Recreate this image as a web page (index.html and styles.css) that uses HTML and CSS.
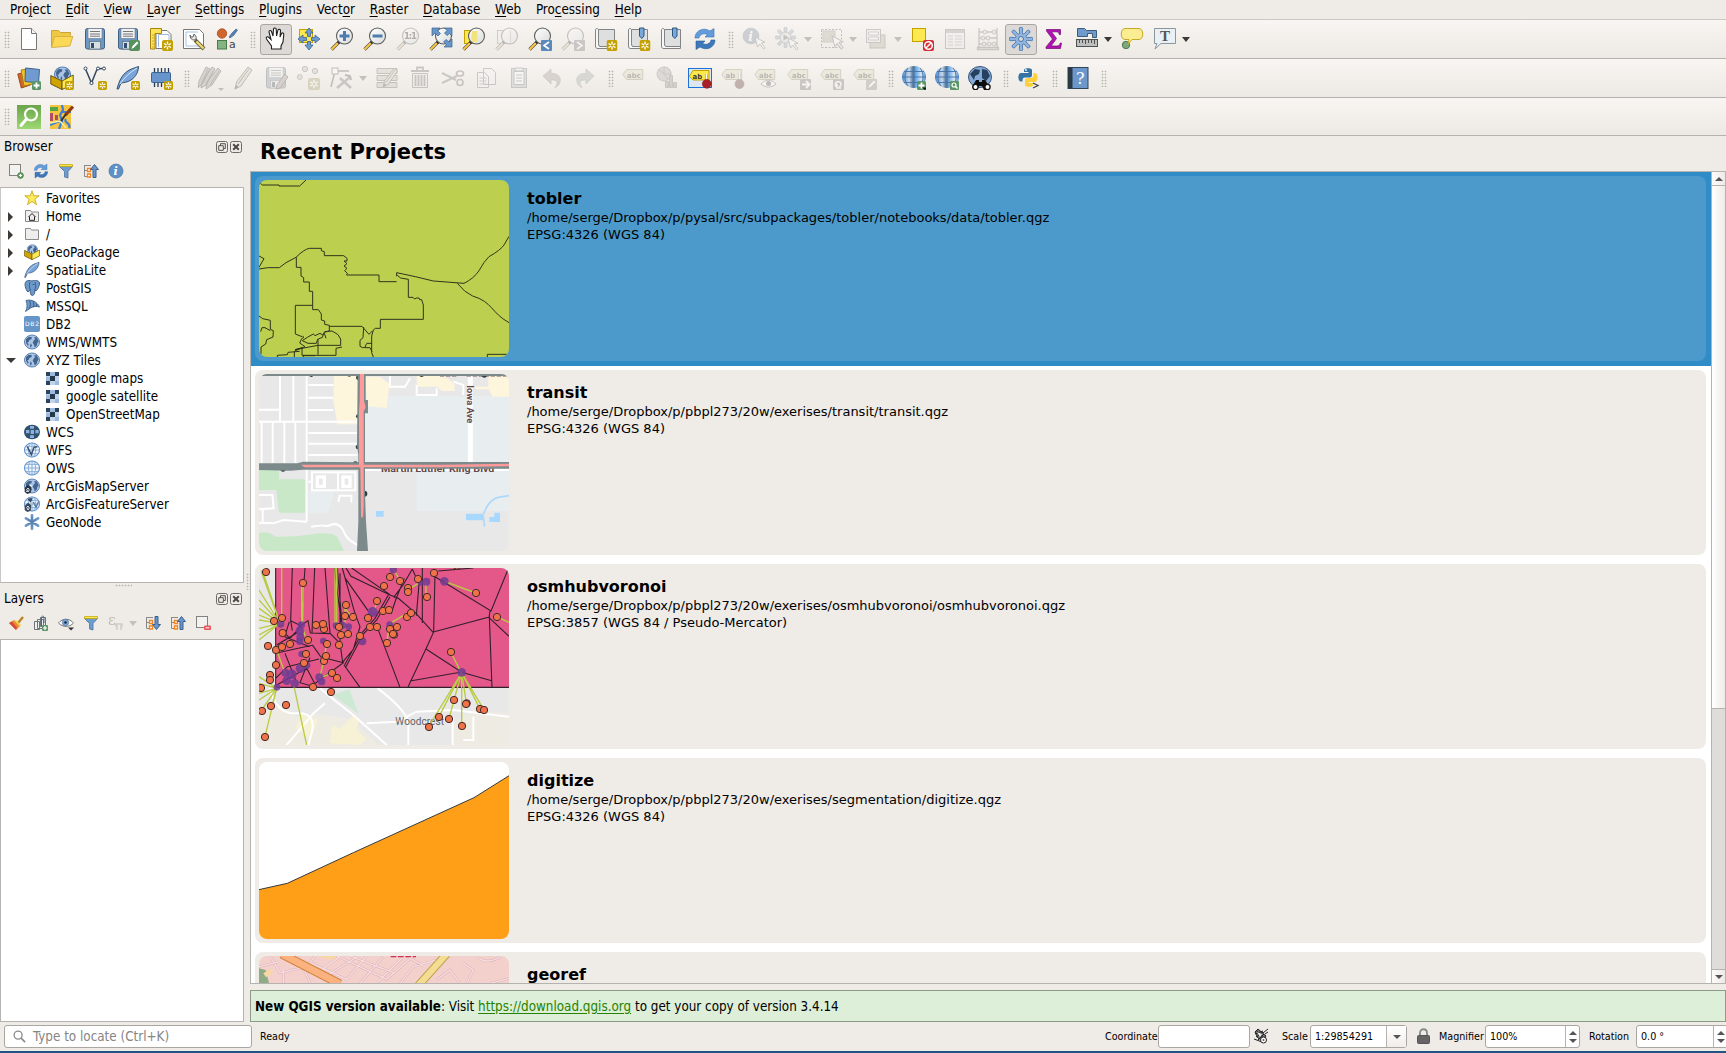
FILE: index.html
```html
<!DOCTYPE html>
<html lang="en">
<head>
<meta charset="utf-8">
<title>QGIS</title>
<link rel="stylesheet" href="styles.css">
</head>
<body>
<svg class="defs" width="0" height="0" aria-hidden="true">
<defs>
<linearGradient id="g-glass" x1="0" y1="0" x2="1" y2="1"><stop offset="0" stop-color="#fff"/><stop offset="1" stop-color="#d9dcdc"/></linearGradient>
<linearGradient id="g-green" x1="0" y1="0" x2="0" y2="1"><stop offset="0" stop-color="#6ba44a"/><stop offset="1" stop-color="#9cd873"/></linearGradient>
<linearGradient id="g-globe" x1="0" y1="0" x2="1" y2="0"><stop offset="0" stop-color="#4b88cc"/><stop offset=".3" stop-color="#c9d8e8"/><stop offset=".45" stop-color="#5b7898"/><stop offset=".6" stop-color="#74aee8"/><stop offset=".8" stop-color="#e0e8ef"/><stop offset="1" stop-color="#4b88cc"/></linearGradient>

<symbol id="star" viewBox="0 0 11 11"><rect width="11" height="11" rx="2" fill="#c4a000"/><path d="M5.500 1.500v8M2 3.500l7 4M9 3.500l-7 4" stroke="#fff" stroke-width="1.400"/><circle cx="5.500" cy="5.500" r="1.200" fill="#c4a000"/></symbol>
<symbol id="plus" viewBox="0 0 9 9"><rect width="9" height="9" rx="1.500" fill="#5b9568"/><path d="M4.500 1.500v6M1.500 4.500h6" stroke="#fff" stroke-width="1.800"/></symbol>
<symbol id="lens" viewBox="0 0 24 24"><path d="M9 15l-7.500 7.500" stroke="#555" stroke-width="3.200"/><path d="M8 16l-6.500 6.500" stroke="#fcc93c" stroke-width="1.900"/><path d="M10.500 13.500l-2.500 2.500" stroke="#222" stroke-width="2.600"/><circle cx="14.500" cy="9" r="8" fill="url(#g-glass)" stroke="#5c5c5c" stroke-width="1.100"/></symbol>
<symbol id="cursor" viewBox="0 0 12 14"><path d="M1 1l2.500 10 2.200-3 3.800 5 1.600-1.300-3.700-4.700 3.600-.8z" fill="#fff" stroke="#777" stroke-width="1"/></symbol>
<symbol id="world" viewBox="0 0 24 24"><ellipse cx="12" cy="12" rx="11.300" ry="10.500" fill="#a9c4e6" stroke="#5a84b6" stroke-width="1.500"/><path d="M3 8l4-4 5 1-1 3-3 1-1 3-2 0 2 4-1 2-3-5zM15 5l4 0 3 6-2 3-1 4-3 2-1-4-2-3 2-4 2-1zM10 14l2 3-2 4-1-3z" fill="#45648b"/></symbol>
<symbol id="grid" viewBox="0 0 24 24"><ellipse cx="12" cy="12" rx="11.300" ry="10.500" fill="#edf4fc" stroke="#6494cb" stroke-width="1.600"/><path d="M1 12h22M3 6.500h18M3 17.500h18M12 1.500v21" fill="none" stroke="#84abd7" stroke-width="1.400"/><ellipse cx="12" cy="12" rx="5.500" ry="10.500" fill="none" stroke="#84abd7" stroke-width="1.400"/></symbol>
<symbol id="pencil" viewBox="0 0 24 24"><path d="M17 1l4 3-11 16-6 3 1.500-7z" fill="#d8cf94" stroke="#554f38" stroke-width="1"/><path d="M18 3L7 18M4 23l1-3.500 2 1.500z" stroke="#554f38" fill="#333" stroke-width="1"/></symbol>
<symbol id="tag" viewBox="0 0 24 24"><path d="M.8 8.500L4.500 3.500h16.200v10H4.500z" fill="#f1d971" stroke="#a98e2f"/></symbol>
<symbol id="i-restore" viewBox="0 0 12 12"><rect x=".5" y=".5" width="11" height="11" rx="2" fill="none" stroke="#6c6a67"/><path d="M4.500 5V2.700h4.800v4.800H7.500M2.700 4.700h4.600v4.600H2.700z" fill="none" stroke="#55534f"/></symbol>
<symbol id="i-close" viewBox="0 0 12 12"><rect x=".5" y=".5" width="11" height="11" rx="2" fill="none" stroke="#6c6a67"/><path d="M3.200 3.200l5.600 5.600M8.800 3.200L3.200 8.800" stroke="#4c4a47" stroke-width="2"/></symbol>

<symbol id="i-new" viewBox="0 0 24 24"><path d="M4.500 1.500h10l5 5v16h-15z" fill="#fff" stroke="#777"/><path d="M14.500 1.500v5h5" fill="#f4f4f4" stroke="#777"/></symbol>
<symbol id="i-open" viewBox="0 0 24 24"><path d="M1.500 19.500v-16h7l2 2h10v3" fill="#efc844" stroke="#c8a43a"/><path d="M1.500 20.500l3-11h18.300l-3 9.500z" fill="#fcd857" stroke="#d7b145"/></symbol>
<symbol id="i-save" viewBox="0 0 24 24"><rect x="2.500" y="1.500" width="19" height="20.500" rx="2" fill="#6e97c4" stroke="#41617f"/><rect x="5" y="1.500" width="14" height="10" fill="#f2f2f2" stroke="#66798f" stroke-width=".6"/><path d="M7 4.500h10M7 7h10M7 9.200h10" stroke="#777"/><rect x="6.500" y="14.500" width="11" height="7.500" fill="#d7e0de" stroke="#566c83" stroke-width=".7"/><rect x="8" y="16" width="3" height="5" fill="#314f6e"/></symbol>
<symbol id="i-saveas" viewBox="0 0 24 24"><use href="#i-save"/><rect x="13" y="13" width="11" height="11" rx="2" fill="#56925c"/><path d="M15.500 22l1-3 4.500-4.500 1.500 1.500-4.500 4.500z" fill="#fff"/></symbol>
<symbol id="i-layout" viewBox="0 0 24 24"><path d="M7 3.500h11l4 4v14H7z" fill="#fff" stroke="#777"/><path d="M9.500 20V7.500H20V14" fill="none" stroke="#9fbcdd"/><path d="M1.500 1.500h11v5H6v15.500H1.500z" fill="#fbe35c" stroke="#a98308"/><path d="M3 8h3M3 11h3M3 14h3M3 17h3M3 20h3" stroke="#d0ab30"/><use href="#star" x="13" y="13" width="11" height="11"/></symbol>
<symbol id="i-layoutmgr" viewBox="0 0 24 24"><path d="M1.500 2.500h16l4 4V21.500h-20z" fill="#fff" stroke="#777"/><path d="M4 5h12M4 5v14h14" fill="none" stroke="#a7c1e3"/><path d="M13 13l9 9" stroke="#6c6440" stroke-width="4"/><path d="M14.500 14.500l7 7" stroke="#eadb78" stroke-width="2.400"/><path d="M8 8c0 5 4 6 6 4 1-2-1-4-2-5l-1 3-2 0z" fill="#e5e5e5" stroke="#666"/></symbol>
<symbol id="i-style" viewBox="0 0 24 24"><circle cx="7" cy="6.500" r="4.700" fill="#cf642d" stroke="#a94c22" stroke-width=".8"/><path d="M14 10l3-4 4-4 1.500 1-3.500 5-4 3z" fill="#5482b4" stroke="#3e638c" stroke-width=".7"/><rect x="2.500" y="13.500" width="9" height="8.500" fill="#84b384" stroke="#497a49"/><text x="14" y="21" class="glyph-a">a</text></symbol>
<symbol id="i-pan" viewBox="0 0 24 24"><path d="M7.500 22v-3L2.500 12c-1-2 1-3 2.500-1.500l2 2L5 5c0-2 2-2 2.500-.5L9 9 9.500 2c.5-1.500 2.500-1.300 2.700 0l.4 7L14 3c.7-1.300 2.700-.7 2.500.8L16 10l1.500-3.500c.8-1.300 2.500-.5 2.300.8L19 15l-2 4v3z" fill="#fff" stroke="#1f1f1f" stroke-width="1.100"/></symbol>
<symbol id="i-panlayer" viewBox="0 0 24 24"><rect x="2.500" y="2.500" width="13" height="13" fill="#fce94f" stroke="#c4a000"/><path d="M12 1l4 5h-2.500v3.500H10.500V6H8zM12 23l4-5h-2.500v-3.500h-3V18H8zM1 12l5-4v2.500h3.500v3H6V16zM23 12l-5-4v2.500h-3.500v3H18V16z" fill="#6d9bd0" stroke="#3c628c" stroke-width=".8"/></symbol>
<symbol id="i-zoomin" viewBox="0 0 24 24"><use href="#lens"/><path d="M14.500 4v10M9.500 9h10" stroke="#4f7cb0" stroke-width="3"/></symbol>
<symbol id="i-zoomout" viewBox="0 0 24 24"><use href="#lens"/><path d="M9.500 9h10" stroke="#4f7cb0" stroke-width="3"/></symbol>
<symbol id="i-zoom11" viewBox="0 0 24 24"><use href="#lens"/><text x="8" y="12.300" textLength="13" class="glyph-b">1:1</text></symbol>
<symbol id="i-zoomfull" viewBox="0 0 24 24"><use href="#lens"/><path d="M3 1h8L8.500 3.500l3 3-2.500 2.500-3-3L3 9zM23 1v8l-2.500-2.500-2.500 2-2.500-2.500 2.500-2.500L15.500 1zM23 20h-8l2.500-2.500-3-2.500 2.500-2.500 3 2.500L23 12z" fill="#6797ca" stroke="#39618e" stroke-width=".7"/></symbol>
<symbol id="i-zoomsel" viewBox="0 0 24 24"><rect x="2.500" y="3.500" width="13" height="13" fill="#fce94f" stroke="#c4a000"/><use href="#lens"/><path d="M10 4h5.500v11H11l-2-3z" fill="#f3e37c"/></symbol>
<symbol id="i-zoomlayer" viewBox="0 0 24 24"><rect x="2.500" y="3.500" width="13" height="13" fill="#eee" stroke="#888"/><use href="#lens"/><path d="M15.500 3.500v12" stroke="#aaa"/></symbol>
<symbol id="i-zoomlast" viewBox="0 0 24 24"><use href="#lens"/><rect x="13" y="13" width="11" height="11" rx="1" fill="#5b88bd"/><path d="M21 15l-5 3.500 5 3.500" fill="none" stroke="#fff" stroke-width="1.600"/></symbol>
<symbol id="i-zoomnext" viewBox="0 0 24 24"><use href="#lens"/><rect x="13" y="13" width="11" height="11" rx="1" fill="#777"/><path d="M16 15l5 3.500-5 3.500" fill="none" stroke="#fff" stroke-width="1.600"/></symbol>
<symbol id="i-book" viewBox="0 0 24 24"><path d="M4.500 2.500h16v17h-16z" fill="#dedfdf" stroke="#808486"/><path d="M4.500 16.500V3c0-2-3-2-3 0v16c0 2 1 2.500 2.500 2.500H20.500v-2H6c-1.500 0-1.500-3-1.500-3z" fill="#f7f7f7" stroke="#808486"/></symbol>
<symbol id="i-newmap" viewBox="0 0 24 24"><use href="#i-book"/><use href="#star" x="12.500" y="13" width="11" height="11"/></symbol>
<symbol id="i-bookmark" viewBox="0 0 24 24"><use href="#i-book"/><path d="M12.500 1h4.500v8l-2.200 2.500L12.500 9z" fill="#79a8dc" stroke="#2e567f"/></symbol>
<symbol id="i-newbookmark" viewBox="0 0 24 24"><use href="#i-bookmark"/><use href="#star" x="12.500" y="13" width="11" height="11"/></symbol>
<symbol id="i-refresh" viewBox="0 0 24 24"><path d="M2 11c0-7 8-11.500 15-7l4-2.500V10h-9l2.500-2.500C10 5.500 6.500 8 6 11z" fill="#639cdb" stroke="#3971b2" stroke-width=".6"/><path d="M22 13c0 7-8 11.500-15 7l-4 2.500V14h9l-2.500 2.500c4 2 8 0 8.500-3.500z" fill="#3c78ba" stroke="#2e609c" stroke-width=".6"/></symbol>
<symbol id="i-info" viewBox="0 0 24 24"><circle cx="12" cy="12" r="10.500" fill="#5d8fc9" stroke="#44709f"/><text x="8.300" y="18.500" class="glyph-i">i</text></symbol>
<symbol id="i-identify" viewBox="0 0 24 24"><use href="#i-info" x="0" y="0" width="18" height="18"/><use href="#cursor" x="12" y="9" width="12" height="14"/></symbol>
<symbol id="i-gear" viewBox="0 0 24 24"><g fill="#94b5dd" stroke="#4578b2" stroke-width=".9"><path d="M10.700 6.500L10.300 1.800a1.700 1.700 0 0 1 3.400 0l-.4 4.700 1.700.7 3.100-3.600a1.700 1.700 0 0 1 2.400 2.400L16.900 9.100l.7 1.600 4.700-.4a1.700 1.700 0 0 1 0 3.400l-4.700-.4-.7 1.700 3.600 3.100a1.700 1.700 0 0 1-2.400 2.400L15 16.900l-1.700.7.4 4.700a1.700 1.700 0 0 1-3.400 0l.4-4.700-1.700-.7-3.100 3.600a1.700 1.700 0 0 1-2.400-2.400L7.100 15l-.7-1.700-4.700.4a1.700 1.700 0 0 1 0-3.400l4.700.4.7-1.600-3.600-3.100a1.700 1.700 0 0 1 2.400-2.400L9 7.200z"/></g><circle cx="12" cy="12" r="2.500" fill="#dcdad7" stroke="#4578b2"/></symbol>
<symbol id="i-action" viewBox="0 0 24 24"><use href="#i-gear" width="21" height="21"/><circle cx="10.500" cy="10.500" r="5.500" fill="#ddd" stroke="#888"/><path d="M8.500 7.500l5 3-5 3z" fill="#666"/><use href="#cursor" x="12" y="10" width="12" height="14"/></symbol>
<symbol id="i-select" viewBox="0 0 24 24"><rect x="1.500" y="2.500" width="20" height="18" fill="none" stroke="#555" stroke-dasharray="2 1.500"/><rect x="3" y="4" width="12" height="11" fill="#bcae6c" stroke="#998d59"/><use href="#cursor" x="11" y="8" width="13" height="15"/></symbol>
<symbol id="i-forms" viewBox="0 0 24 24"><rect x="5" y="8" width="15" height="13" fill="#c1b578" stroke="#777"/><rect x="1.500" y="2.500" width="14" height="13" fill="#eee" stroke="#777"/><path d="M3.500 5h10v3h-10zM3.500 10h10v3h-10z" fill="#fff" stroke="#888"/></symbol>
<symbol id="i-deselect" viewBox="0 0 24 24"><rect x="2.500" y="1.500" width="13" height="13" fill="#fce94f" stroke="#c4a000"/><rect x="13" y="13" width="11" height="11" rx="2" fill="#d62e38"/><circle cx="18.500" cy="18.500" r="3.800" fill="none" stroke="#fff" stroke-width="1.500"/><path d="M16 21l5-5" stroke="#fff" stroke-width="1.500"/></symbol>
<symbol id="i-table" viewBox="0 0 24 24"><rect x="2.500" y="2.500" width="19" height="19" fill="#eee" stroke="#777"/><path d="M3 4.500h18" stroke="#999" stroke-width="3"/><path d="M5 9h5M12 9h7M5 12h5M12 12h7M5 15h5M12 15h7M5 18h5M12 18h7" stroke="#999"/></symbol>
<symbol id="i-abacus" viewBox="0 0 24 24"><path d="M3 1v19M21 1v19M1.500 20.500h21v2h-21zM3 5h18M3 11h18M3 17h18" fill="none" stroke="#7d706e" stroke-width="1.300"/><g fill="#ddd" stroke="#89706d"><circle cx="9" cy="5" r="2"/><circle cx="18" cy="5" r="2"/><circle cx="7" cy="11" r="2"/><circle cx="12" cy="11" r="2"/><circle cx="8" cy="17" r="2"/><circle cx="13" cy="17" r="2"/><circle cx="18" cy="17" r="2"/></g></symbol>
<symbol id="i-sigma" viewBox="0 0 24 24"><path d="M4.500 2.500h14v5h-1.300c-.4-2-1-2.700-3-2.700H9.500l5 6.700-5.500 7.500h6c2 0 2.800-1 3.300-3h1.200l-1 5.500H4v-1.500l6.500-8L4.500 4z" fill="#b411b4" stroke="#6f086f" stroke-width=".7"/></symbol>
<symbol id="i-measure" viewBox="0 0 24 24"><path d="M2.500 9.500v-8h7l2 2h10v7h-4v-4h-5v3z" fill="#6d9acb" stroke="#3d5c7c"/><rect x="1.500" y="12.500" width="21" height="7" fill="#bdbfbf" stroke="#4e5252"/><path d="M4.500 13v3M7.500 13v3M10.500 13v4M13.500 13v3M16.500 13v3M19.500 13v4" stroke="#4e5252"/></symbol>
<symbol id="i-tip" viewBox="0 0 24 24"><circle cx="6" cy="18" r="3.700" fill="#79a97b" stroke="#4e7a50"/><path d="M5 1.500h14c5 0 5 11 0 11h-7L8 17.500l1-5H5c-5 0-5-11 0-11z" fill="#fbee92" stroke="#c8a824"/></symbol>
<symbol id="i-text" viewBox="0 0 24 24"><path d="M1.500 1.500h21v15H8L2 22l2-5.500H1.500z" fill="#e9f0f6" stroke="#8c969d"/><text x="7" y="14" class="glyph-t">T</text></symbol>

<symbol id="i-addlayers" viewBox="0 0 24 24"><path d="M.8 8l8-2 4.500 13-9 3z" fill="#d5652a" stroke="#9c4413"/><path d="M4 4l10-1 2 15-9 2z" fill="#f3c22a" stroke="#a47f0c"/><path d="M8.500 2l14 1.500-1 13.500-13.500-1.500z" fill="#709bd0" stroke="#3d628c"/><use href="#plus" x="15" y="15" width="9" height="9"/></symbol>
<symbol id="i-geopkg" viewBox="0 0 24 24"><use href="#world" x="4" y="0" width="17" height="17"/><path d="M.8 9.500L12 15v8.500L.8 18z" fill="#cfa400" stroke="#5f4a00" stroke-width=".9"/><path d="M23.200 9L12 15v8.500l11.200-5.500z" fill="#fce94f" stroke="#5f4a00" stroke-width=".9"/></symbol>
<symbol id="i-newgeopkg" viewBox="0 0 24 24"><use href="#i-geopkg"/><use href="#star" x="15" y="15" width="9" height="9"/></symbol>
<symbol id="i-newshape" viewBox="0 0 24 24"><path d="M2.500 3l6 14 5-12.500c1-2 2-2 6-2" fill="none" stroke="#33475f" stroke-width="1.500"/><g fill="#fff" stroke="#33475f"><circle cx="2.500" cy="2.500" r="1.500"/><circle cx="8.500" cy="17" r="1.600"/><circle cx="15" cy="2.500" r="1.500"/><circle cx="21" cy="2.500" r="1.500"/></g><use href="#star" x="15" y="15" width="9" height="9"/></symbol>
<symbol id="i-feather" viewBox="0 0 24 24"><path d="M1 23C3 15 6 9 11 5.500 15 2.500 19 2 22.500.5 22.500 5 20 11 15 14c-4 2.500-7 2.500-10 3L2.500 23z" fill="#79a5dc" stroke="#32506f"/><path d="M4 18C8 12 14 6 21 2" fill="none" stroke="#d9e8f8"/></symbol>
<symbol id="i-newspatialite" viewBox="0 0 24 24"><use href="#i-feather"/><use href="#star" x="15" y="15" width="9" height="9"/></symbol>
<symbol id="i-memory" viewBox="0 0 24 24"><path d="M5.500 2v5M9 2v5M12.500 2v5M16 2v5M19.500 2v5M5.500 17v4M9 17v4M12.500 17v4" stroke="#223b59" stroke-width="1.300"/><rect x="2.500" y="6.500" width="19" height="10" rx="1" fill="#6795cb" stroke="#3d638f"/><use href="#star" x="15" y="15" width="9" height="9"/></symbol>
<symbol id="i-edits" viewBox="0 0 24 24"><path d="M8 1l4 2L5 17l-5 5 1-7zM14 1l3 2-9 16-5 3 1-6zM20 2l3 3-9 14-6 4 1-7z" fill="#b89388" stroke="#4d4140"/><path d="M10 3L4 16M15 5L8 18M21 5l-9 14" stroke="#5f4d4a"/></symbol>
<symbol id="i-saveedits" viewBox="0 0 24 24"><use href="#i-save"/><path d="M21 8l3 3-8 11-4 1 1-4z" fill="#b89388" stroke="#4d4140"/></symbol>
<symbol id="i-points" viewBox="0 0 24 24"><g fill="#b9c1b9" stroke="#777"><circle cx="8" cy="3" r="2.700"/><circle cx="18" cy="5" r="2.700"/><circle cx="2.800" cy="11" r="2.500"/></g><use href="#star" x="11" y="12" width="12" height="12"/></symbol>
<symbol id="i-vertex" viewBox="0 0 24 24"><path d="M5 5L1 21M5 5h14" stroke="#555" stroke-width="1.500"/><rect x="2" y="2" width="6" height="6" fill="#fff" stroke="#555"/><path d="M10 12l11 10M20 11L7 22" stroke="#777" stroke-width="2.600"/><path d="M15 9l5 1 1 4" fill="none" stroke="#555" stroke-width="2"/></symbol>
<symbol id="i-attr" viewBox="0 0 24 24"><path d="M2 2.500h20v5H2zM2 9.500h20v5H2zM2 16.500h20v5H2z" fill="#c5c49a" stroke="#666"/><use href="#pencil" x="5" y="0" width="20" height="23"/></symbol>
<symbol id="i-trash" viewBox="0 0 24 24"><path d="M4.500 7.500h15v14h-15z" fill="#efe4e4" stroke="#906363"/><path d="M7.500 9v11M10.500 9v11M13.500 9v11M16.500 9v11M3 5h18M9 4V1.500h6V4" fill="none" stroke="#906363" stroke-width="1.800"/></symbol>
<symbol id="i-cut" viewBox="0 0 24 24"><path d="M1 7l14 7M1 17l15-7" stroke="#777" stroke-width="2"/><ellipse cx="19" cy="7.500" rx="3.500" ry="2.500" fill="none" stroke="#906363" stroke-width="1.700"/><ellipse cx="19" cy="16.500" rx="3" ry="3" fill="none" stroke="#906363" stroke-width="1.700"/></symbol>
<symbol id="i-copy" viewBox="0 0 24 24"><path d="M9.500 2.500h8l4 4v12h-12zM3.500 6.500h7l4 4v11h-11z" fill="#f4f4f4" stroke="#777"/><path d="M5.500 12h7M5.500 15h7M5.500 18h7" stroke="#888"/></symbol>
<symbol id="i-paste" viewBox="0 0 24 24"><rect x="4.500" y="2.500" width="15" height="19" fill="#bbb" stroke="#777"/><path d="M7 5.500h10v13H7z" fill="#fff" stroke="#777"/><path d="M8 2h8v3H8zM9 9h6M9 12h6M9 15h6" fill="#eee" stroke="#777"/></symbol>
<symbol id="i-undo" viewBox="0 0 24 24"><path d="M3 10l8-7v4.500c11-1 12 11 4 14 4-5 2-8-4-7.500V18z" fill="#bd9284" stroke="#9a7265" stroke-width=".8"/></symbol>
<symbol id="i-redo" viewBox="0 0 24 24"><path d="M21 10l-8-7v4.500c-11-1-12 11-4 14-4-5-2-8 4-7.500V18z" fill="#8fae9a" stroke="#6f8f7a" stroke-width=".8"/></symbol>
<symbol id="i-abc" viewBox="0 0 24 24"><use href="#tag" width="24" height="24"/><text x="5" y="11.500" class="glyph-l">abc</text></symbol>
<symbol id="i-diagram" viewBox="0 0 24 24"><circle cx="9" cy="8" r="7" fill="#a6b199" stroke="#777"/><path d="M9 8L3 3M9 8V1a7 7 0 0 1 7 7zM9 8l4 6" fill="#bda49c" stroke="#777"/><path d="M10.500 15.500h3v6h-3zM14.500 9.500h3v12h-3zM18.500 16.500h3v5h-3z" fill="#a88f87" stroke="#777"/></symbol>
<symbol id="i-pin" viewBox="0 0 24 24"><use href="#tag"/><text x="4.500" y="11.500" class="glyph-l">ab</text><path d="M18.500 7v9" stroke="#777" stroke-width="3"/><path d="M18.500 7v9" stroke="#fff" stroke-width="1.800"/><circle cx="18.500" cy="18" r="4.500" fill="#a92026" stroke="#8f1519" stroke-width=".7"/></symbol>
<symbol id="i-highlight" viewBox="0 0 24 24"><rect x=".5" y="2.500" width="23" height="19" fill="#dce7f2" stroke="#1c71d8"/><path d="M1.300 10.200L5 4.500h16v9.500H5z" fill="#fce94f" stroke="#c4a000"/><text x="4.500" y="12.500" class="glyph-l">ab</text><path d="M18.500 8v8" stroke="#888" stroke-width="3"/><path d="M18.500 8v8" stroke="#fff" stroke-width="1.800"/><circle cx="18.800" cy="17.800" r="4.400" fill="#a92026" stroke="#8f1519" stroke-width=".7"/></symbol>
<symbol id="i-eyeabc" viewBox="0 0 24 24"><use href="#i-abc"/><path d="M7 18c4-5 11-5 15 0-4 4-11 4-15 0z" fill="#fff" stroke="#666"/><circle cx="14.500" cy="17.500" r="2.500" fill="#555"/></symbol>
<symbol id="i-moveabc" viewBox="0 0 24 24"><use href="#i-abc"/><rect x="13" y="13" width="11" height="11" rx="1" fill="#777"/><path d="M15 18.500h7M19 15l3.500 3.500L19 22" fill="none" stroke="#fff" stroke-width="2"/></symbol>
<symbol id="i-rotabc" viewBox="0 0 24 24"><use href="#i-abc"/><rect x="13" y="13" width="11" height="11" rx="1" fill="#777"/><path d="M16 21c-2-4 1-6 4-5 2 2 1 4-1 5M17 18v4h4" fill="none" stroke="#fff" stroke-width="1.600"/></symbol>
<symbol id="i-editabc" viewBox="0 0 24 24"><use href="#i-abc"/><rect x="13" y="13" width="11" height="11" rx="1" fill="#8f8d77"/><path d="M15.500 22l1-3 4.500-4.500 1.500 1.500-4.500 4.500z" fill="#fff"/></symbol>
<symbol id="i-globe" viewBox="0 0 24 24"><ellipse cx="12" cy="11" rx="12" ry="11" fill="url(#g-globe)"/><path d="M2 5.500h20M0 11h24M2 16.500h20M12 0v22M6 2c-4 5-4 13 0 18M18 2c4 5 4 13 0 18" fill="none" stroke="#3f72aa" stroke-width=".9"/></symbol>
<symbol id="i-globeadd" viewBox="0 0 24 24"><use href="#i-globe"/><use href="#plus" x="15" y="15" width="9" height="9"/><path d="M20 21.500h6L23 24z" fill="#111"/></symbol>
<symbol id="i-globefind" viewBox="0 0 24 24"><use href="#i-globe"/><rect x="15" y="15" width="9" height="9" rx="1" fill="#5b9568"/><circle cx="19" cy="19" r="2" fill="none" stroke="#fff" stroke-width="1.200"/><path d="M20.500 20.500l2 2" stroke="#fff" stroke-width="1.500"/></symbol>
<symbol id="i-binoc" viewBox="0 0 24 24"><ellipse cx="12" cy="11" rx="11.500" ry="10.500" fill="#86aad6" stroke="#38577b"/><path d="M2 8l5-5 5 1-1 4-4 2-1 4zM14 3l5 1 3 6-4 5-4-3z" fill="#26405f"/><path d="M4 21l4-7h3v2h3v-2h3l5 7-3 3h-3l-2-4h-3l-2 4H6z" fill="#0b0d10"/><circle cx="7.500" cy="21" r="2.600" fill="#fff" stroke="#111" stroke-width="1.300"/><circle cx="19.500" cy="21" r="2.600" fill="#fff" stroke="#111" stroke-width="1.300"/></symbol>
<symbol id="i-python" viewBox="0 0 24 24"><path d="M7 5V4c0-2.500 8-2.500 8 0v5c0 2-1 2.500-3 2.500H8c-2 0-2.500 1-2.500 4H4c-3.500 0-3.500-8.500 0-8.500h7.500v-1H7z" fill="#3673a5"/><circle cx="9" cy="4" r=".9" fill="#fff"/><path d="M16.500 7H18c3.500 0 3.500 9 0 9h-6.500v1h4.500v2c0 2.500-8 2.500-8 0v-4c0-2 1-3 3-3h3c2 0 2.500-1.500 2.500-3z" fill="#fdd03b"/><path d="M16 17l5 2.500-5 2.500" fill="none" stroke="#444" stroke-width="1.300"/></symbol>
<symbol id="i-help" viewBox="0 0 24 24"><rect x="2" y="1.500" width="20" height="21" fill="#6b97cb" stroke="#314459"/><rect x="2" y="1.500" width="4.500" height="21" fill="#2b3947"/><text x="10" y="17.500" class="glyph-q">?</text></symbol>
<symbol id="i-osmsearch" viewBox="0 0 24 24"><rect width="24" height="24" fill="url(#g-green)"/><circle cx="14" cy="9.500" r="6" fill="none" stroke="#fff" stroke-width="2.200"/><path d="M9.500 14L4 20.500" stroke="#fff" stroke-width="3" stroke-linecap="round"/></symbol>
<symbol id="i-osm" viewBox="0 0 24 24"><rect width="21" height="24" fill="#f5c542"/><path d="M0 2h8v4H0z" fill="#54a544"/><path d="M0 8h3v8H0zM5 10h3v5H5z" fill="#b24a6c"/><path d="M12 0l1 5-3 5 2 6-3 8M11 7h10M0 20l10-4M16 14c-3 4 6 4 3 9" fill="none" stroke="#3f7fd6" stroke-width="2.200"/><path d="M0 18l10-2 6 7" fill="none" stroke="#fff0a0" stroke-width="1.400"/><path d="M23 1.500L15.500 10" stroke="#913c0e" stroke-width="3.200"/><path d="M16 9l-5 7" stroke="#333" stroke-width="2"/></symbol>

<symbol id="s-addlayer" viewBox="0 0 16 16"><rect x="1.500" y="1.500" width="11" height="11" fill="#f2f2f0" stroke="#828280"/><circle cx="12.500" cy="12.500" r="2.800" fill="#72aa72" stroke="#3d7d3d"/><path d="M12.500 11v3M11 12.500h3" stroke="#fff"/></symbol>
<symbol id="s-removelayer" viewBox="0 0 16 16"><rect x="1.500" y="1.500" width="11" height="11" fill="#f2f2f0" stroke="#828280"/><rect x="9" y="10.500" width="7" height="4.500" rx="1" fill="#ea5560"/><path d="M10.500 12.800h4" stroke="#fff"/></symbol>
<symbol id="s-filter" viewBox="0 0 16 16"><path d="M1.500 3.500h13L10 8.500V15l-3.500-1V8.500z" fill="#709bce" stroke="#4a74a3" stroke-width=".8"/><path d="M1.500 1.500h13v2h-13z" fill="#fce94f" stroke="#c4a000" stroke-width=".7"/></symbol>
<symbol id="s-collapse" viewBox="0 0 16 16"><path d="M1 2.500h7M1.500 2.500v11H5M1.500 7.500H5" fill="none" stroke="#888"/><path d="M4.500 5.500h3v3h-3zM4.500 11h3v3h-3z" fill="#fff" stroke="#f5861f" stroke-width="1.300"/><path d="M11.500 1.500l4 5h-2.500v8h-3v-8H7.500z" fill="#6795cb" stroke="#3c628c"/></symbol>
<symbol id="s-expand" viewBox="0 0 16 16"><path d="M1 2.500h7M1.500 2.500v11H5M1.500 7.500H5" fill="none" stroke="#888"/><path d="M4.500 5.500h3v3h-3zM4.500 11h3v3h-3z" fill="#fff" stroke="#f5861f" stroke-width="1.300"/><path d="M11.500 14.500l4-5h-2.500v-8h-3v8H7.500z" fill="#6795cb" stroke="#3c628c"/></symbol>
<symbol id="s-brush" viewBox="0 0 16 16"><path d="M15 2l-5 6" stroke="#b98424" stroke-width="2.400"/><path d="M1 8l5-3 6 6-4 4z" fill="#e88c35"/><path d="M1 8l3-1.500 5 6L8 15z" fill="#d7493c"/><path d="M6 5l2 0 5 5-1 2z" fill="#f4d14b"/></symbol>
<symbol id="s-group" viewBox="0 0 16 16"><path d="M1.500 6.500h5v8h-5zM4.500 4.500h6v9h-6zM7.500 2.500h5v9h-5z" fill="#eef0f0" stroke="#6d7376"/><path d="M8.500 11V3c0-3 3-2 2.500 0v5" fill="none" stroke="#466b95"/><use href="#plus" x="9" y="10" width="6" height="6"/></symbol>
<symbol id="s-eye" viewBox="0 0 16 16"><path d="M.5 8c4-5 11-5 15 0-4 4.500-11 4.500-15 0z" fill="#fff" stroke="#777"/><circle cx="7.500" cy="7.500" r="3.200" fill="#7ba6d8" stroke="#4d6f95" stroke-width=".6"/><circle cx="7.500" cy="7.500" r="1.200" fill="#123"/><path d="M10 12.500h6L13 15.500z" fill="#333"/></symbol>
<symbol id="s-expr" viewBox="0 0 16 16"><text x="0" y="10" class="glyph-e">ε</text><path d="M9 15v-4h-1V9h6v2h-1v4" fill="none" stroke="#888" stroke-width="1.500"/></symbol>
<symbol id="t-star" viewBox="0 0 16 16"><path d="M8 .8l1.800 5h5.400l-4.300 3.400 1.600 5.500L8 11.500l-4.500 3.200 1.600-5.500L.8 5.800h5.400z" fill="#fcec5c" stroke="#c7a91c" stroke-width=".9"/></symbol>
<symbol id="t-folder" viewBox="0 0 16 16"><path d="M1.500 13.500v-11h5l1 1.500h7v9.500z" fill="#eeeeec" stroke="#8b8b89"/></symbol>
<symbol id="t-home" viewBox="0 0 16 16"><use href="#t-folder"/><path d="M4.500 9L8 5.500 11.500 9M5.500 8.500v3.800h5V8.500" fill="none" stroke="#222"/></symbol>
<symbol id="t-elephant" viewBox="0 0 16 16"><path d="M2 1.500C4 0 6 .5 8 1c3-1 7-1 7.500 2 0 3-1.500 6-3 7.500H11c-.5 2 0 4-2.500 5C6 15.500 6.500 12 6 10l-2 2C1.500 9.500 0 4 2 1.500z" fill="#6e9acb" stroke="#3c5f86"/><path d="M6 2c-1 3-1 5 .5 8M11 2c1 3 1 5-.5 8.500M8.500 4.500h2" fill="none" stroke="#3c5f86"/></symbol>
<symbol id="t-mssql" viewBox="0 0 16 16"><path d="M2 2.500C8 1 13 4 15.500 9c-3-1-6-1-9 1l-5 3.500C3.500 10 3.500 6 2 2.500z" fill="#6e9acb" stroke="#4a6d93"/><path d="M5.500 2.500c1.500 3 1 6-.5 8.500M9 3.500c1 2 1 3.500 0 6M12 5.500c.7 1 .8 2 .3 3.200" fill="none" stroke="#3c5f86"/></symbol>
<symbol id="t-db2" viewBox="0 0 16 16"><rect x="0" y="0" width="16" height="16" rx="2" fill="#6695ca"/><text x="1" y="10.300" textLength="14" class="glyph-d">DB2</text></symbol>
<symbol id="t-tiles" viewBox="0 0 13 13"><rect width="13" height="13" fill="#c0d4eb"/><path d="M0 0h4v4H0zM9 0h4v4H9zM0 9h4v4H0z" fill="#2c4258"/><path d="M4 4h5v5H4z" fill="#26394c"/><path d="M4 0h5v4H4zM0 5h4v4H0zM9 9h4v4H9z" fill="#9abbdf"/></symbol>
<symbol id="t-wcs" viewBox="0 0 24 24"><ellipse cx="12" cy="12" rx="12" ry="11" fill="#31516f"/><path d="M3 9h5v5H3zM9 3h6v4H9zM10 9h5v6h-5zM17 9h5v5h-5zM9 17h6v4H9z" fill="#8ab1df"/></symbol>
<symbol id="t-wfs" viewBox="0 0 24 24"><use href="#grid"/><path d="M5 7l6 12 4-11 5-1" fill="none" stroke="#39506c" stroke-width="2.200"/></symbol>
<symbol id="t-arcmap" viewBox="0 0 24 24"><use href="#world"/><path d="M1 15l5-5 5 4-1 8-5 2-4-3z" fill="#263447"/><path d="M4 17l2-2 2 3-2 3zM9 11l3 1M3 20h2" stroke="#fff" stroke-width="1.300" fill="none"/></symbol>
<symbol id="t-arcfeat" viewBox="0 0 24 24"><use href="#grid"/><path d="M5 4l8-1-3 7zM1 15l5-5 5 4-1 8-5 2-4-3z" fill="#34465c"/><path d="M4 17l2-2 2 3-2 3z" stroke="#fff" stroke-width="1.300" fill="none"/><path d="M14 9l4 8 4-9" fill="none" stroke="#5479a5" stroke-width="2"/></symbol>
<symbol id="t-geonode" viewBox="0 0 16 16"><path d="M8 1.300v13.400M2 4.300l12 7.400M14 4.300L2 11.700" stroke="#6c96c5" stroke-width="2.700" stroke-linecap="round"/><path d="M8 3v10M4 5.500l8 5M12 5.500l-8 5" stroke="#547ca9" stroke-width="1"/></symbol>
</defs>
</svg>

<div class="window">
<nav class="menubar">
<span>Pro<u>j</u>ect</span><span><u>E</u>dit</span><span><u>V</u>iew</span><span><u>L</u>ayer</span><span><u>S</u>ettings</span><span><u>P</u>lugins</span><span>Vect<u>o</u>r</span><span><u>R</u>aster</span><span><u>D</u>atabase</span><span><u>W</u>eb</span><span>Pro<u>c</u>essing</span><span><u>H</u>elp</span>
</nav>

<div class="toolbar">
<i class="grip first"></i>
<svg><use href="#i-new"/></svg><svg><use href="#i-open"/></svg><svg><use href="#i-save"/></svg><svg><use href="#i-saveas"/></svg><svg><use href="#i-layout"/></svg><svg><use href="#i-layoutmgr"/></svg><svg><use href="#i-style"/></svg>
<i class="grip"></i>
<b class="pressed"><svg><use href="#i-pan"/></svg></b><svg><use href="#i-panlayer"/></svg><svg><use href="#i-zoomin"/></svg><svg><use href="#i-zoomout"/></svg><svg class="off"><use href="#i-zoom11"/></svg><svg><use href="#i-zoomfull"/></svg><svg><use href="#i-zoomsel"/></svg><svg class="off"><use href="#i-zoomlayer"/></svg><svg><use href="#i-zoomlast"/></svg><svg class="off"><use href="#i-zoomnext"/></svg><svg><use href="#i-newmap"/></svg><svg><use href="#i-newbookmark"/></svg><svg><use href="#i-bookmark"/></svg><svg><use href="#i-refresh"/></svg>
<i class="grip"></i>
<svg class="off"><use href="#i-identify"/></svg><svg class="off"><use href="#i-action"/></svg><i class="drop dim"></i><svg class="off"><use href="#i-select"/></svg><i class="drop dim"></i><svg class="off"><use href="#i-forms"/></svg><i class="drop dim"></i><svg><use href="#i-deselect"/></svg><svg class="off"><use href="#i-table"/></svg><svg class="off"><use href="#i-abacus"/></svg><b class="pressed"><svg><use href="#i-gear"/></svg></b><svg><use href="#i-sigma"/></svg><svg><use href="#i-measure"/></svg><i class="drop"></i><svg><use href="#i-tip"/></svg><svg><use href="#i-text"/></svg><i class="drop"></i>
</div>

<div class="toolbar">
<i class="grip first"></i>
<svg><use href="#i-addlayers"/></svg><svg><use href="#i-newgeopkg"/></svg><svg><use href="#i-newshape"/></svg><svg><use href="#i-newspatialite"/></svg><svg><use href="#i-memory"/></svg>
<i class="grip"></i>
<b class="corner"><svg class="off"><use href="#i-edits"/></svg></b><svg class="off"><use href="#pencil"/></svg><svg class="off"><use href="#i-saveedits"/></svg><svg class="off"><use href="#i-points"/></svg><svg class="off"><use href="#i-vertex"/></svg><i class="drop dim"></i><svg class="off"><use href="#i-attr"/></svg><svg class="off"><use href="#i-trash"/></svg><svg class="off"><use href="#i-cut"/></svg><svg class="off"><use href="#i-copy"/></svg><svg class="off"><use href="#i-paste"/></svg><svg class="off"><use href="#i-undo"/></svg><svg class="off"><use href="#i-redo"/></svg>
<i class="grip"></i>
<svg class="off"><use href="#i-abc"/></svg><svg class="off"><use href="#i-diagram"/></svg><svg><use href="#i-highlight"/></svg><svg class="off"><use href="#i-pin"/></svg><svg class="off"><use href="#i-eyeabc"/></svg><svg class="off"><use href="#i-moveabc"/></svg><svg class="off"><use href="#i-rotabc"/></svg><svg class="off"><use href="#i-editabc"/></svg>
<i class="grip"></i>
<svg><use href="#i-globeadd"/></svg><svg><use href="#i-globefind"/></svg><svg><use href="#i-binoc"/></svg>
<i class="grip"></i><svg><use href="#i-python"/></svg><i class="grip"></i><svg><use href="#i-help"/></svg><i class="grip"></i>
</div>

<div class="toolbar short">
<i class="grip first"></i><svg><use href="#i-osmsearch"/></svg><svg><use href="#i-osm"/></svg>
</div>

<div class="body">
<aside class="docks">
<header class="dock-title"><span>Browser</span><svg><use href="#i-restore"/></svg><svg><use href="#i-close"/></svg></header>
<div class="dock-tools"><svg><use href="#s-addlayer"/></svg><svg><use href="#i-refresh"/></svg><svg><use href="#s-filter"/></svg><svg><use href="#s-collapse"/></svg><svg><use href="#i-info"/></svg></div>
<ul class="tree">
<li><i></i><svg><use href="#t-star"/></svg>Favorites</li>
<li><i class="closed"></i><svg><use href="#t-home"/></svg>Home</li>
<li><i class="closed"></i><svg><use href="#t-folder"/></svg>/</li>
<li><i class="closed"></i><svg><use href="#i-geopkg"/></svg>GeoPackage</li>
<li><i class="closed"></i><svg><use href="#i-feather"/></svg>SpatiaLite</li>
<li><i></i><svg><use href="#t-elephant"/></svg>PostGIS</li>
<li><i></i><svg><use href="#t-mssql"/></svg>MSSQL</li>
<li><i></i><svg><use href="#t-db2"/></svg>DB2</li>
<li><i></i><svg><use href="#world"/></svg>WMS/WMTS</li>
<li><i class="opened"></i><svg><use href="#world"/></svg>XYZ Tiles</li>
<li class="child"><svg><use href="#t-tiles"/></svg>google maps</li>
<li class="child"><svg><use href="#t-tiles"/></svg>google satellite</li>
<li class="child"><svg><use href="#t-tiles"/></svg>OpenStreetMap</li>
<li><i></i><svg><use href="#t-wcs"/></svg>WCS</li>
<li><i></i><svg><use href="#t-wfs"/></svg>WFS</li>
<li><i></i><svg><use href="#grid"/></svg>OWS</li>
<li><i></i><svg><use href="#t-arcmap"/></svg>ArcGisMapServer</li>
<li><i></i><svg><use href="#t-arcfeat"/></svg>ArcGisFeatureServer</li>
<li><i></i><svg><use href="#t-geonode"/></svg>GeoNode</li>
</ul>
<div class="hsplit"></div>
<header class="dock-title layers"><span>Layers</span><svg><use href="#i-restore"/></svg><svg><use href="#i-close"/></svg></header>
<div class="dock-tools"><svg><use href="#s-brush"/></svg><svg><use href="#s-group"/></svg><svg><use href="#s-eye"/></svg><svg><use href="#s-filter"/></svg><svg class="off"><use href="#s-expr"/></svg><i class="drop dim"></i><svg><use href="#s-expand"/></svg><svg><use href="#s-collapse"/></svg><svg><use href="#s-removelayer"/></svg></div>
<div class="layer-list"></div>
</aside>
<div class="vsplit"></div>

<main class="welcome">
<h1>Recent Projects</h1>
<div class="recent">
<div class="items">
<article class="project selected"><div class="card">
<svg class="thumb" viewBox="57 150 750 531"><rect x="57" y="150" width="750" height="531" fill="#bdcf4e"/>
<g fill="none" stroke="#2d351d" stroke-width="3" stroke-linejoin="round">
<path d="M57 156l10 9h50v3h62l19-18M57 378l15 8-15 26M57 417l26-4h35l20-15 30-16q24-24 40-27h36v7l9 3v12h58l10 8v8h-9l9 8-9 7 9 7-7 7 8 8-2 5h97v20h53"/>
<path d="M470 439v-11q60 12 110 25l92 7q30-15 45-38 15-28 30-42 35-20 45-35l15-26M652 460q22 28 46 38c60 18 55 50 109 80M472 436l10 8 23 4v54h14l5 5 5-3h8l2 5h6l5 16v43H421v27h-15l-6 5-5 18v50l8 20M169 382v30h14v26l8 5v13h17v28h10v42h-52v86l20 8"/>
<path d="M218 526v13h17l9 13v18l10 3v10l14 3v17l-16 4-5 15-14 6-4 12h-25l-17-8 15-10 18-10 5 5 15-7 8 5 5-5 5 15M268 589h98l21 24 10-10M371 591l-2 32-9 8v18l8 4 7-1 4-10M379 640h16M375 653h15l6 12"/>
<path d="M254 605l22-2 17 10 9 14v19h-68l-69 13 21-6v23h102v-21l18-4M234 627v47M187 618l5 4-7 4-6 13 16 11-31 13M163 664v17M112 681v-5l30-2 2-7 35-3M190 681v-4h35M57 558l11 8 23 5v27l9 4-1 19-19 8-3 13-14 9v21M62 605l4-12h9l16 9M742 681v-8h58"/></g></svg>
<div class="info"><h2>tobler</h2><p>/home/serge/Dropbox/p/pysal/src/subpackages/tobler/notebooks/data/tobler.qgz</p><p>EPSG:4326 (WGS 84)</p></div></div></article>

<article class="project"><div class="card">
<svg class="thumb" viewBox="27 27 750 531"><rect x="27" y="27" width="750" height="531" fill="#e8e8e8"/>
<path d="M345 94h432v200H345zM500 310h277v128H500zM175 377h78l-18 66h-60z" fill="#e8edf0"/>
<path d="M252 30h75v148h-65l-12-70zM345 35h45l28 22-8 72-58-5zM500 30h80l34 28v20h-38l-15-13h-60zM665 65h50v-38h62v68h-50l-10-22h-38z" fill="#fdf5dc"/>
<path d="M27 315h60v28h78v100H87l-8-68H27zM27 505q25-9 50 10 45 3 130-10 40-2 55 10l20 43H27z" fill="#c8e8c8"/>
<g fill="none" stroke="#fff" stroke-width="6"><path d="M170 30v440M27 170h295M90 30v137M130 30v137M27 134h60M35 170v124M68 170v124M103 170v124M136 170v124M175 60h75M175 98h75M175 135h75M175 204h147M175 236h147M175 270h147M345 315h432M170 470l-70-5-30 10-43-2M27 390h40l4 40-44 3M38 430v40M265 410l4-18h35v20M183 485q30-5 50-2 30-15 45 10c10 25 15 30 48 50M420 30v35h45l15-25M500 60v30h60V70M640 90V60l-30-10"/><path d="M661 30v262" stroke-width="15"/><rect x="186" y="322" width="130" height="54"/><path d="M264 322v54M175 350h10"/></g>
<g fill="none" stroke="#fff" stroke-width="10"><rect x="202" y="336" width="21" height="28"/><rect x="279" y="336" width="21" height="28"/></g>
<path d="M701 447q14-42 43-50l33-5M700 455l4 30" fill="none" stroke="#add8fa" stroke-width="5"/><path d="M378 438h23v17h-23zM648 446h53v20h-53zM718 456h15v-13h17v28h-32z" fill="#a9d8ff"/>
<text x="393" y="320" class="map-label" textLength="340" lengthAdjust="spacingAndGlyphs">Martin Luther King Blvd</text><path d="M345 311h432v-20H345z" fill="#7c8a8c"/>
<text transform="translate(652 61) rotate(90)" class="map-label" textLength="114" lengthAdjust="spacingAndGlyphs">Iowa Ave</text>
<path d="M570 32h52M650 32h120" stroke="#795b60" stroke-width="5" stroke-dasharray="13 5"/>
<g fill="#2f3f40"><circle cx="184" cy="30" r="6"/><circle cx="298" cy="29" r="6"/><circle cx="515" cy="29" r="7"/><circle cx="703" cy="30" r="8"/><circle cx="325" cy="38" r="7"/><circle cx="324" cy="154" r="6"/><circle cx="324" cy="246" r="7"/><circle cx="316" cy="297" r="8"/><circle cx="343" cy="386" r="9"/><circle cx="99" cy="312" r="8"/></g>
<path d="M27 30h750" stroke="#7c8a8c" stroke-width="6"/><path d="M323 27h24v78h7v40h-9v240l3 85 6 88h-33l4-88V270l-4-30z" fill="#7c8a8c"/><path d="M27 295h115l18-5 170 2v22H160l-40 3-93-2z" fill="#7c8a8c"/>
<path d="M330 27h12v80l5 20-6 12v290l-2 28h-6l-2-150h-168l-10-8h174v-160l2-30z" fill="#ff9a9a"/><path d="M335 303h240l202-3" fill="none" stroke="#ff9a9a" stroke-width="7"/></svg>
<div class="info"><h2>transit</h2><p>/home/serge/Dropbox/p/pbpl273/20w/exerises/transit/transit.qgz</p><p>EPSG:4326 (WGS 84)</p></div></div></article>

<article class="project"><div class="card">
<svg class="thumb" viewBox="27 24 750 531"><rect x="27" y="24" width="750" height="531" fill="#e8e8e8"/>
<path d="M27 470q60-60 110 0l60-10 110 20 80 75H27zM610 490l60-40 107 10v95H610z" fill="#eeebe2"/><path d="M246 495l25 13 38-42 18 18-8 24 30 30-20 17-90-5zM155 462l48 17-20 60-45-35z" fill="#f7f1d5"/><path d="M248 405l50-18 28 75z" fill="#cde9d4"/>
<g fill="none" stroke="#fff" stroke-width="6"><path d="M60 385q20 80 80 75t45 60l-10 35M210 385q60 50 100 80l100 90M383 385q80 60 92 100v70M350 490l90-5 60-30 110-5 167 20M640 540h30v-70M608 470v85M110 555l80-95 35-30"/></g>
<text x="436" y="495" class="place" textLength="146">Woodcrest</text>
<path d="M77 24h700v358H77z" fill="#e35888"/>
<g fill="none" stroke="#351f2c" stroke-width="3.300"><path d="M77 24v358h700M127 24l-5 158 5 30M165 24l-11 155M194 24l-8 195M225 24l15 195M253 24l23 180M262 24l14 170M277 24l36 130 17 46-20 68-35 42M288 24l15 25 117 56 25 10 53 45 52 58-22 48-55 117M415 105l-40 70-38 42-53 98M420 110l-40 70-40 42-52 98M282 315l48 67M383 205l67 177M305 24l115 80M463 55l-25 62-15 45M487 27l-26 45-30 40M487 27l20 45-8 95M517 24v165M555 40l-4 175M555 50l168 103 52-127M550 216l168-45 8 212M528 267l107 70 90 25M480 363l155-27M720 153l-3 20 60 56M565 33l105-9M284 52l70 100M122 182l30 15 22-15 7 37 60 2 35 35M78 280l70-16 40-8 25 35 67 17-95 70-35-10 30-75M80 255l60-36 15-37M80 375l90-50 30 57M105 220l15 15 18-20M105 280l32 80M118 185l-14 45 75 30M270 40v210l8 57M77 355l35-35 95-23"/></g>
<g fill="none" stroke="#b9cb41" stroke-width="4"><path d="M95 24v170M155 70v120M160 70l-2 120M255 24v180M260 24v180M90 190L27 90M90 190L27 120M90 190L27 145M90 190L27 165M90 190L27 180M90 190L27 205M90 190L27 225M90 190L27 240M90 190L40 40M90 190L32 30M80 385L27 350M80 385L27 370M80 385L27 400M80 385L27 420M80 385L35 450M80 385L65 440M80 385L45 530M130 370l40 185M80 270l25 70M583 64l95 35M603 277l31 62M635 338l-98 160M635 338l-68 132M635 338l-38 138M635 338l-23 81M635 338v157M635 338l14 90M635 338l54 107M635 338l66 110M741 171l36 16M430 27l20 35M528 67v45M505 70l-35 22M370 155l12-30M420 190l60-35M420 190l-10 57M220 240l10 10-10 60-12 45M208 355l35-15M285 205v-60l20 25M158 200l10 40 10-2"/></g>
<g fill="#713b94" fill-opacity=".85"><circle cx="92" cy="192" r="11"/><circle cx="154" cy="195" r="11"/><circle cx="150" cy="212" r="13"/><circle cx="151" cy="231" r="12"/><circle cx="149" cy="244" r="11"/><circle cx="258" cy="197" r="10"/><circle cx="278" cy="196" r="11"/><circle cx="296" cy="200" r="10"/><circle cx="220" cy="243" r="10"/><circle cx="337" cy="244" r="12"/><circle cx="368" cy="156" r="15"/><circle cx="430" cy="29" r="11"/><circle cx="529" cy="65" r="12"/><circle cx="511" cy="69" r="8"/><circle cx="583" cy="64" r="13"/><circle cx="419" cy="194" r="10"/><circle cx="635" cy="337" r="13"/><circle cx="106" cy="338" r="12"/><circle cx="125" cy="343" r="15"/><circle cx="151" cy="325" r="14"/><circle cx="170" cy="316" r="11"/><circle cx="110" cy="362" r="13"/><circle cx="134" cy="370" r="13"/><circle cx="155" cy="282" r="10"/><circle cx="208" cy="352" r="12"/><circle cx="215" cy="365" r="11"/><circle cx="81" cy="382" r="10"/></g>
<g fill="#ef7249" stroke="#432a28" stroke-width="3"><circle cx="48" cy="36" r="11"/><circle cx="159" cy="69" r="11"/><circle cx="72" cy="183" r="11"/><circle cx="96" cy="174" r="11"/><circle cx="98" cy="219" r="11"/><circle cx="54" cy="258" r="11"/><circle cx="78" cy="270" r="11"/><circle cx="96" cy="261" r="11"/><circle cx="120" cy="252" r="11"/><circle cx="174" cy="240" r="11"/><circle cx="168" cy="282" r="11"/><circle cx="162" cy="309" r="11"/><circle cx="78" cy="315" r="11"/><circle cx="60" cy="345" r="11"/><circle cx="60" cy="360" r="11"/><circle cx="33" cy="384" r="11"/><circle cx="36" cy="453" r="11"/><circle cx="63" cy="438" r="11"/><circle cx="108" cy="435" r="11"/><circle cx="45" cy="531" r="11"/><circle cx="189" cy="381" r="11"/><circle cx="243" cy="396" r="11"/><circle cx="246" cy="339" r="11"/><circle cx="261" cy="354" r="11"/><circle cx="222" cy="303" r="11"/><circle cx="228" cy="288" r="11"/><circle cx="231" cy="252" r="11"/><circle cx="267" cy="255" r="11"/><circle cx="273" cy="225" r="11"/><circle cx="294" cy="222" r="11"/><circle cx="267" cy="201" r="11"/><circle cx="198" cy="195" r="11"/><circle cx="222" cy="207" r="11"/><circle cx="219" cy="192" r="11"/><circle cx="285" cy="168" r="11"/><circle cx="309" cy="171" r="11"/><circle cx="288" cy="135" r="11"/><circle cx="330" cy="228" r="11"/><circle cx="354" cy="174" r="11"/><circle cx="360" cy="201" r="11"/><circle cx="381" cy="201" r="11"/><circle cx="381" cy="123" r="11"/><circle cx="399" cy="153" r="11"/><circle cx="417" cy="150" r="11"/><circle cx="402" cy="78" r="11"/><circle cx="420" cy="51" r="11"/><circle cx="450" cy="63" r="11"/><circle cx="474" cy="84" r="11"/><circle cx="474" cy="96" r="11"/><circle cx="504" cy="57" r="11"/><circle cx="531" cy="111" r="11"/><circle cx="552" cy="39" r="11"/><circle cx="621" cy="17" r="11"/><circle cx="678" cy="99" r="11"/><circle cx="741" cy="171" r="11"/><circle cx="471" cy="171" r="11"/><circle cx="483" cy="159" r="11"/><circle cx="420" cy="207" r="11"/><circle cx="441" cy="201" r="11"/><circle cx="432" cy="224" r="11"/><circle cx="429" cy="222" r="11"/><circle cx="411" cy="249" r="11"/><circle cx="603" cy="276" r="11"/><circle cx="612" cy="420" r="11"/><circle cx="650" cy="430" r="11"/><circle cx="648" cy="432" r="11"/><circle cx="690" cy="447" r="11"/><circle cx="702" cy="450" r="11"/><circle cx="567" cy="471" r="11"/><circle cx="597" cy="477" r="11"/><circle cx="537" cy="501" r="11"/><circle cx="636" cy="498" r="11"/></g></svg>
<div class="info"><h2>osmhubvoronoi</h2><p>/home/serge/Dropbox/p/pbpl273/20w/exerises/osmhubvoronoi/osmhubvoronoi.qgz</p><p>EPSG:3857 (WGS 84 / Pseudo-Mercator)</p></div></div></article>

<article class="project"><div class="card">
<svg class="thumb" viewBox="27 36 750 531"><rect x="27" y="36" width="750" height="531" fill="#fff"/><path d="M22 420l90-20 198-92 362-165 110-69v500H22z" fill="#ff9f18" stroke="#35383a" stroke-width="3"/></svg>
<div class="info"><h2>digitize</h2><p>/home/serge/Dropbox/p/pbpl273/20w/exerises/segmentation/digitize.qgz</p><p>EPSG:4326 (WGS 84)</p></div></div></article>

<article class="project"><div class="card">
<svg class="thumb" viewBox="27 618 750 531"><rect x="27" y="618" width="750" height="531" fill="#f4d0cd"/><path d="M27 655l20 5 10 40H27z" fill="#8eaa87"/><path d="M200 618h60l-15 12zM40 670l25-15 3 15-20 12z" fill="#f8d7a4"/>
<g fill="none" stroke="#dcb0b7" stroke-width="7"><path d="M60 618l30 50 70-15 20 45M100 660v40M27 650l60-15M195 618l-15 20 110 50 60-70M235 675l90-57M260 618l150 70 80-70M300 618l130 50M330 700l70-80M380 700l75-75M220 655l50-35M450 700l40-50 70-20M470 618l50 30M640 640l30 20-20 40M560 690l40-30 30 40M680 618q30 30 75 0M720 700l57-15"/></g><g fill="none" stroke="#f8dfdf" stroke-width="4"><path d="M60 618l30 50 70-15 20 45M100 660v40M27 650l60-15M195 618l-15 20 110 50 60-70M235 675l90-57M260 618l150 70 80-70M300 618l130 50M330 700l70-80M380 700l75-75M220 655l50-35M450 700l40-50 70-20M470 618l50 30M640 640l30 20-20 40M560 690l40-30 30 40M680 618q30 30 75 0M720 700l57-15"/></g>
<path d="M95 612l175 90" stroke="#d1843b" stroke-width="27"/><path d="M95 612l175 90" stroke="#fbb27e" stroke-width="21"/><path d="M590 612l-90 100" stroke="#bda24b" stroke-width="25"/><path d="M590 612l-90 100" stroke="#f4dc92" stroke-width="19"/><path d="M422 619h76" stroke="#d52c50" stroke-width="6" stroke-dasharray="17 5"/></svg>
<div class="info"><h2>georef</h2></div></div></article>
</div>
<div class="scrollbar"><b><i class="up"></i></b><div class="slider"></div><div class="track"></div><b><i class="down"></i></b></div>
</div>
<div class="banner"><strong>New QGIS version available</strong>: Visit <a>https://download.qgis.org</a> to get your copy of version 3.4.14</div>
</main>
</div>

<footer class="status">
<div class="locator"><svg viewBox="0 0 14 14"><circle cx="5.500" cy="5.500" r="4.300" fill="none" stroke="#8c8c8c" stroke-width="1.400"/><path d="M8.700 8.700l4.300 4.300" stroke="#8c8c8c" stroke-width="1.800"/></svg><span>Type to locate (Ctrl+K)</span></div>
<span class="ready">Ready</span>
<span class="lbl">Coordinate</span><div class="field coord"></div>
<svg class="mouse" viewBox="0 0 16 16"><path d="M2 4l3-3 8 7-3 5-5-3z" fill="#777" stroke="#222"/><path d="M2 6l8-3M3 9l7-5M5 12l6-6M3 2l8 9M10 5l5-4M12 6l3-2M1 11l8 3" stroke="#222"/><path d="M4 4l5 2-2 3z" fill="#eee"/><circle cx="10.500" cy="12" r="3" fill="#fff" stroke="#222"/><circle cx="10.500" cy="12" r="1" fill="#555"/></svg>
<span class="lbl">Scale</span><div class="field combo"><span>1:29854291</span><b><i class="down"></i></b></div>
<svg class="lock" viewBox="0 0 13 16"><path d="M3 8V5c0-5 7-5 7 0v3" fill="none" stroke="#858c85" stroke-width="1.800"/><rect x=".5" y="7.500" width="12" height="8" rx="1" fill="#656565" stroke="#555"/></svg>
<span class="lbl mag">Magnifier</span><div class="field spin"><span>100%</span><b><i class="up"></i><i class="down"></i></b></div>
<span class="lbl rot">Rotation</span><div class="field spin last"><span>0.0 °</span><b><i class="up"></i><i class="down"></i></b></div>
</footer>
</div>
</body>
</html>
```

FILE: styles.css
```css
* { box-sizing: border-box; }
html, body { margin: 0; height: 100%; overflow: hidden; }
body { background: #efebe7; color: #000; font: 13.33px/18px "DejaVu Sans Condensed", "DejaVu Sans", sans-serif; font-stretch: condensed; }
.defs { position: absolute; }
.window { width: 1726px; height: 1053px; display: flex; flex-direction: column; border-bottom: 2px solid #1f5484; }

.menubar { height: 20px; flex: none; display: flex; gap: 14.750px; padding-left: 10px; border-bottom: 1px solid #ccc8c4; line-height: 20px; }
.menubar u { text-underline-offset: 2px; text-decoration-thickness: 1px; }

.toolbar { height: 39px; flex: none; display: flex; align-items: center; background: linear-gradient(#f8f5f2, #edeae5); border-bottom: 1px solid #b5b2af; }
.toolbar.short { height: 38px; }
.toolbar svg { width: 24px; height: 24px; margin: 0 4.500px; flex: none; overflow: visible; }
.off { opacity: .32; filter: grayscale(.7); }
.grip { width: 16px; height: 17px; flex: none; background: radial-gradient(circle, #b6b3af 40%, transparent 50%) 0 0 / 3px 3px content-box; padding: 0 4px 0 6px; }
.grip.first { width: 12.500px; padding: 0 2.500px 0 4px; }
.pressed { width: 32px; height: 31px; margin: 0 .500px; display: flex; align-items: center; justify-content: center; background: #dcd9d6; border: 1px solid #aaa6a2; border-radius: 3px; }
.toolbar .pressed svg { margin: 0; }
.corner { display: flex; position: relative; }
.corner::after { content: ""; position: absolute; right: 3px; bottom: -1px; border: 3px solid transparent; border-top-color: #c2bfbb; border-bottom: 0; }
.drop { width: 12px; height: 24px; flex: none; display: flex; align-items: center; }
.drop::before { content: ""; border: 4.500px solid transparent; border-top: 5px solid #3b3a38; border-bottom: 0; }
.drop.dim::before { border-top-color: #c4c1bd; }

.glyph-a { font: 11px "DejaVu Sans"; fill: #444; }
.glyph-b { font: bold 8.500px "DejaVu Sans"; fill: #222; }
.glyph-i { font: italic bold 17px "DejaVu Serif"; fill: #fff; }
.glyph-t { font: bold 15px "Liberation Serif"; fill: #555; }
.glyph-l { font: bold 7px "DejaVu Sans"; fill: #3c3a34; }
.glyph-q { font: 16px "DejaVu Serif"; fill: #fff; }
.glyph-e { font: 15px "DejaVu Serif"; fill: #555; }
.glyph-d { font: 6px "DejaVu Sans"; fill: #fff; }

.body { flex: 1; min-height: 0; display: flex; }
.docks { width: 244px; display: flex; flex-direction: column; }
.dock-title { height: 22px; flex: none; display: flex; align-items: center; gap: 2px; padding: 0 2px 0 4px; }
.dock-title span { flex: 1; }
.dock-title svg { width: 12px; height: 12px; }
.dock-tools { height: 29px; flex: none; display: flex; align-items: center; gap: 9px; padding: 0 8px 3px; }
.dock-tools svg { width: 16px; height: 16px; flex: none; }
.dock-tools .drop { width: 7px; margin: 0 0 0 -4px; }
.tree { height: 396px; flex: none; margin: 0; padding: 1px 0 0; list-style: none; background: #fff; border: 1px solid #b5b2af; border-left-color: #c9c6c3; }
.tree li { height: 18px; padding-top: 1px; display: flex; align-items: center; white-space: nowrap; }
.tree li > svg { width: 16px; height: 16px; margin: -1px 6px 0 0; }
.tree li > i { width: 23px; height: 10px; padding-left: 7px; display: flex; align-items: center; }
.tree li .closed::before { content: ""; border: 5px solid transparent; border-left: 5px solid #3b3a38; border-right: 0; }
.tree li .opened::before { content: ""; margin-left: -2px; border: 5px solid transparent; border-top: 5px solid #3b3a38; border-bottom: 0; }
.tree .child { padding-left: 45px; }
.tree .child > svg { width: 13px; height: 13px; margin-right: 7px; }
.hsplit { height: 3px; width: 17px; margin: 1px 0 0 115px; flex: none; background: radial-gradient(circle, #b6b3af 40%, transparent 50%) 0 0 / 3px 3px; }
.dock-title.layers { height: 23px; }
.layer-list { flex: 1; background: #fff; border: 1px solid #b5b2af; }
.vsplit { width: 6px; flex: none; background: radial-gradient(circle, #b6b3af 40%, transparent 50%) 2px 437px / 3px 3px; clip-path: inset(437px 0 432px 2px); }

.welcome { flex: 1; min-width: 0; display: flex; flex-direction: column; }
.welcome h1 { height: 35px; flex: none; margin: 0; padding-left: 10px; font: bold 21px/33px "DejaVu Sans"; font-stretch: normal; }
.recent { height: 813px; flex: none; display: flex; overflow: hidden; background: #fff; border: 1px solid #b5b2af; }
.items { flex: 1; min-width: 0; }
.project { height: 194px; padding: 4px 5px 5px 4px; }
.selected { background: #308cc6; }
.card { height: 185px; display: flex; padding: 4px; border-radius: 8px; background: #efebe7; }
.selected .card { background: #4c9acb; }
.thumb { width: 250px; height: 177px; flex: none; border-radius: 8px; }
.info { padding: 9px 0 0 18px; font: 13px/17px "DejaVu Sans"; font-stretch: normal; }
.info h2 { margin: 0 0 1px; font-size: 16px; line-height: 19px; }
.info p { margin: 0; white-space: nowrap; }
.map-label { font: bold 28px "Roboto", "DejaVu Sans"; fill: #65494b; }
.place { font: 30px "Roboto", "DejaVu Sans"; fill: #606368; }

.scrollbar { width: 14px; flex: none; display: flex; flex-direction: column; border-left: 1px solid #b5b2af; }
.scrollbar b { height: 14px; flex: none; display: flex; align-items: center; justify-content: center; background: linear-gradient(90deg, #fdfdfc, #edeae6); border-bottom: 1px solid #b5b2af; }
.scrollbar b:last-child { border-bottom: 0; border-top: 1px solid #b5b2af; }
.slider { height: 523px; background: linear-gradient(90deg, #fff, #eeebe7); border-bottom: 1px solid #b5b2af; }
.track { flex: 1; background: #dfddda; }
.up, .down { border: 4px solid transparent; display: block; }
.up { border-bottom: 4px solid #555; border-top: 0; }
.down { border-top: 4px solid #555; border-bottom: 0; }
.banner { height: 32px; margin-top: 6px; padding-left: 4px; line-height: 32px; background: #ddefd8; border: 1px solid #8c9c89; white-space: pre; }
.banner a { color: #268300; text-decoration: underline; text-underline-offset: 2px; }

.status { height: 29px; flex: none; display: flex; align-items: flex-start; padding: 3px 0 0 4px; font-size: 10.670px; line-height: 23px; white-space: nowrap; }
.locator, .field { height: 23px; background: #fff; border: 1px solid #aaa6a2; border-radius: 3px; display: flex; align-items: center; flex: none; }
.locator { width: 248px; padding-left: 8px; font-size: 13.330px; color: #858585; }
.locator svg { width: 13px; height: 13px; margin-right: 7px; }
.ready { width: 853px; padding-left: 8px; flex: none; }
.lbl { width: 53px; flex: none; }
.coord { width: 92px; }
.mouse { width: 16px; height: 16px; margin: 3px 13px 0 3px; flex: none; }
.mouse + .lbl { width: 28px; }
.combo { width: 97px; }
.field span { flex: 1; padding-left: 4px; }
.field b { height: 100%; display: flex; flex-direction: column; align-items: center; justify-content: center; gap: 4px; border-left: 1px solid #b5b2af; }
.combo b { width: 20px; background: linear-gradient(#fff, #f0eeeb); }
.lock { width: 13px; height: 16px; margin: 3px 9px 0 10px; flex: none; }
.status .mag { width: 46px; }
.spin { width: 95px; }
.spin b { width: 14px; }
.status .rot { width: 47px; margin-left: 9px; }
.last { width: 92px; }
```
